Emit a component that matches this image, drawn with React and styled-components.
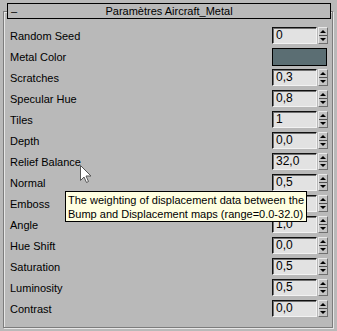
import React from "react";
import styled, { createGlobalStyle } from "styled-components";

const rows = [
    { label: "Random Seed", value: "0" },
    { label: "Metal Color", color: "#5b6e73" },
    { label: "Scratches", value: "0,3" },
    { label: "Specular Hue", value: "0,8" },
    { label: "Tiles", value: "1" },
    { label: "Depth", value: "0,0" },
    { label: "Relief Balance", value: "32,0" },
    { label: "Normal", value: "0,5" },
    { label: "Emboss", value: "0,0" },
    { label: "Angle", value: "1,0" },
    { label: "Hue Shift", value: "0,0" },
    { label: "Saturation", value: "0,5" },
    { label: "Luminosity", value: "0,5" },
    { label: "Contrast", value: "0,0" },
];

export default function App() {
    return (
        <Page>
            <Global />
            <Frame>
                <Header>
                    <Dash>–</Dash>
                    <Title>Paramètres Aircraft_Metal</Title>
                    <span />
                </Header>
                <Rows>
                    {rows.map((row) => (
                        <Row key={row.label}>
                            <Label>{row.label}</Label>
                            {row.color ? (
                                <Swatch $color={row.color} />
                            ) : (
                                <Control>
                                    <Field>{row.value}</Field>
                                    <Spinner>
                                        <SpinBtn><Up /></SpinBtn>
                                        <SpinBtn><Down /></SpinBtn>
                                    </Spinner>
                                </Control>
                            )}
                        </Row>
                    ))}
                </Rows>
            </Frame>
            <Cursor width="13" height="19" viewBox="0 0 13 19">
                <path d="M0.5 0.5 L0.5 15.5 L4 12 L6.5 17.5 L8.5 16.5 L6 11 L11 11 Z" fill="#fff" stroke="#555" strokeWidth="1" />
            </Cursor>
            <Tooltip>
                The weighting of displacement data between the<br />
                Bump and Displacement maps (range=0.0-32.0)
            </Tooltip>
        </Page>
    )
}

const Global = createGlobalStyle`
    body {
        margin: 0;
        background: #b9b9b9;
        font-family: "Liberation Sans", Tahoma, sans-serif;
        font-size: 11px;
        color: #000;
    }
`;

const Page = styled.div`
    position: relative;
    width: 337px;
    height: 331px;
    padding-top: 11px;
    box-sizing: border-box;
    overflow: hidden;
`;

const Frame = styled.div`
    margin: 0 4px 0 3px;
    height: 317px;
    box-sizing: border-box;
    border: 1px solid #7c7c7c;
    box-shadow: inset 1px 1px 0 #e6e6e6, 1px 1px 0 #e6e6e6;
`;

const Header = styled.div`
    display: grid;
    grid-template-columns: 1fr auto 1fr;
    align-items: center;
    height: 16px;
    margin: -9px 1px 0 3px;
    box-sizing: border-box;
    border: 1px solid #000;
    background: #b9b9b9;
`;

const Dash = styled.span`
    padding-left: 3px;
    line-height: 12px;
`;

const Title = styled.span`
    line-height: 12px;
`;

const Rows = styled.div`
    display: flex;
    flex-direction: column;
    padding: 6px 4px 0 6px;
`;

const Row = styled.div`
    display: flex;
    align-items: center;
    height: 21px;
`;

const Label = styled.div`
    flex: 1;
`;

const Control = styled.div`
    display: flex;
    gap: 1px;
`;

const Field = styled.div`
    width: 45px;
    height: 17px;
    box-sizing: border-box;
    border: 1px solid;
    border-color: #111 #f2f2f2 #f2f2f2 #111;
    box-shadow: inset 1px 1px 0 #707070;
    background: #e2e2e2;
    padding: 1px 0 0 3px;
    font-size: 12px;
    line-height: 13px;
`;

const Spinner = styled.div`
    display: flex;
    flex-direction: column;
    width: 10px;
    height: 17px;
    box-sizing: border-box;
    border: 1px solid;
    border-color: #e8e8e8 #707070 #707070 #e8e8e8;
    background: #c4c4c4;
`;

const SpinBtn = styled.div`
    flex: 1;
    display: flex;
    align-items: center;
    justify-content: center;
    &:first-child {
        border-bottom: 1px solid #505050;
    }
`;

const Up = styled.span`
    width: 0;
    height: 0;
    border-left: 3px solid transparent;
    border-right: 3px solid transparent;
    border-bottom: 3px solid #000;
`;

const Down = styled.span`
    width: 0;
    height: 0;
    border-left: 3px solid transparent;
    border-right: 3px solid transparent;
    border-top: 3px solid #000;
`;

const Swatch = styled.div`
    width: 55px;
    height: 18px;
    margin-right: 1px;
    box-sizing: border-box;
    border: 1px solid #000;
    background: ${(p) => p.$color};
`;

const Tooltip = styled.div`
    position: absolute;
    left: 65px;
    top: 191px;
    width: 242px;
    height: 31px;
    box-sizing: border-box;
    border: 1px solid #000;
    background: #ffffe1;
    padding: 1px 0 0 2px;
    font-size: 11px;
    line-height: 14px;
    white-space: nowrap;
`;

const Cursor = styled.svg`
    position: absolute;
    left: 80px;
    top: 165px;
`;
